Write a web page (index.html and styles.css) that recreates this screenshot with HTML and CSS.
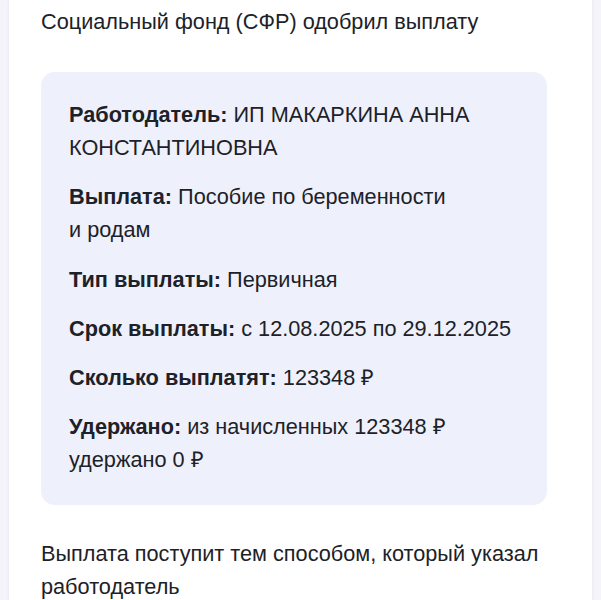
FILE: index.html
```html
<!DOCTYPE html>
<html lang="ru">
<head>
<meta charset="utf-8">
<link rel="stylesheet" href="styles.css">
</head>
<body>
<div class="page">
  <div class="card">
    <p class="title">Социальный фонд (СФР) одобрил выплату</p>
    <div class="info">
      <p class="row"><b>Работодатель:</b> ИП МАКАРКИНА АННА<br>КОНСТАНТИНОВНА</p>
      <p class="row"><b>Выплата:</b> Пособие по беременности<br>и родам</p>
      <p class="row"><b>Тип выплаты:</b> Первичная</p>
      <p class="row"><b>Срок выплаты:</b> с 12.08.2025 по 29.12.2025</p>
      <p class="row"><b>Сколько выплатят:</b> 123348 ₽</p>
      <p class="row"><b>Удержано:</b> из начисленных 123348 ₽<br>удержано 0 ₽</p>
    </div>
    <p class="note">Выплата поступит тем способом, который указал<br>работодатель</p>
  </div>
</div>
</body>
</html>
```
FILE: styles.css
```css
html, body {
  margin: 0;
  padding: 0;
  background: #f4f4fa;
}
body {
  font-family: "Liberation Sans", Arial, sans-serif;
  color: #1d2128;
  font-size: 21.7px;
  line-height: 33px;
}
.page {
  padding: 0 9px;
  height: 600px;
  overflow: hidden;
}
.card {
  background: #ffffff;
  box-shadow: 0 0 3px rgba(0,0,0,0.08);
  padding: 5px 45px 40px 32px;
  min-height: 600px;
}
p { margin: 0; }
.title {
  margin-bottom: 34px;
}
.info {
  background: #eef0fb;
  border-radius: 14px;
  padding: 26px 28px 29px 28px;
  display: flex;
  flex-direction: column;
  gap: 16.3px;
}
.row b {
  font-weight: 700;
}
.note {
  margin-top: 32px;
}
```
